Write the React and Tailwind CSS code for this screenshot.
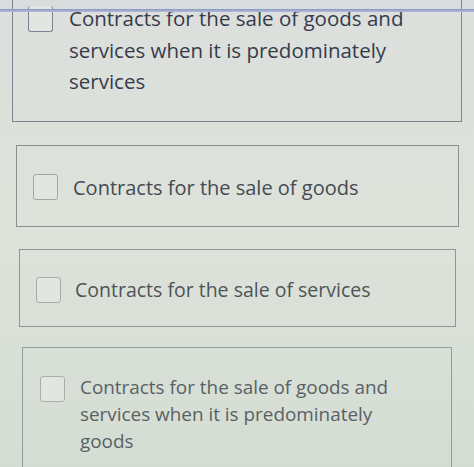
const options = [
  {
    lines: 'Contracts for the sale of goods and services when it is predominately services',
    box: 'ml-[12px] mr-[12px] -mt-[32px] pt-[22px] pb-[23px] pl-[15px] pr-[40px] border-[#7d848e]',
    text: 'ml-[16px] text-[20.5px] leading-[31.5px] text-[#363b4c]',
    check: 'mt-[1px] border-[#7b8290] border-t-0',
  },
  {
    lines: 'Contracts for the sale of goods',
    box: 'ml-[16px] mr-[15px] mt-[23px] pt-[26px] pb-[23px] pl-[16px] border-[#8a9092]',
    text: 'ml-[15px] text-[20px] leading-[31px] text-[#454b53]',
    check: 'border-[#a2a7a8]',
  },
  {
    lines: 'Contracts for the sale of services',
    box: 'ml-[19px] mr-[18px] mt-[22px] pt-[25px] pb-[20px] pl-[16px] border-[#8f9596]',
    text: 'ml-[14px] text-[19.5px] leading-[30px] text-[#4d5457]',
    check: 'border-[#a6abab]',
  },
  {
    lines: 'Contracts for the sale of goods and services when it is predominately goods',
    box: 'ml-[22px] mr-[22px] mt-[20px] pt-[26px] pb-[24px] pl-[17px] pr-[55px] border-[#959b9b]',
    text: 'ml-[15px] text-[18.9px] leading-[27px] text-[#596165]',
    check: 'border-[#a9aeac]',
  },
]

function Option({ opt }) {
  return (
    <div className={`flex items-start border ${opt.box}`}>
      <div className="h-[31px] flex items-center shrink-0">
        <span className={`block w-[25px] h-[26px] rounded-[3px] border-[1.5px] bg-[#e2e6e1] ${opt.check}`} />
      </div>
      <p className={opt.text}>{opt.lines}</p>
    </div>
  )
}

export default function App() {
  return (
    <div
      className="w-[474px] h-[467px] overflow-hidden flex flex-col bg-gradient-to-b from-[#dcdfdc] via-[#dde2da] to-[#d4ddd3]"
      style={{ fontFamily: '"Open Sans", "Noto Sans", sans-serif' }}
    >
      {/* top edge of the sticky header */}
      <div className="h-[9px] shrink-0 bg-[#d9dcdc]" />
      <div className="h-[3px] shrink-0 bg-gradient-to-b from-[#8796c6] to-[#b4bed6] relative z-10" />
      <div className="flex flex-col">
        {options.map((opt, i) => (
          <Option key={i} opt={opt} />
        ))}
      </div>
    </div>
  )
}
